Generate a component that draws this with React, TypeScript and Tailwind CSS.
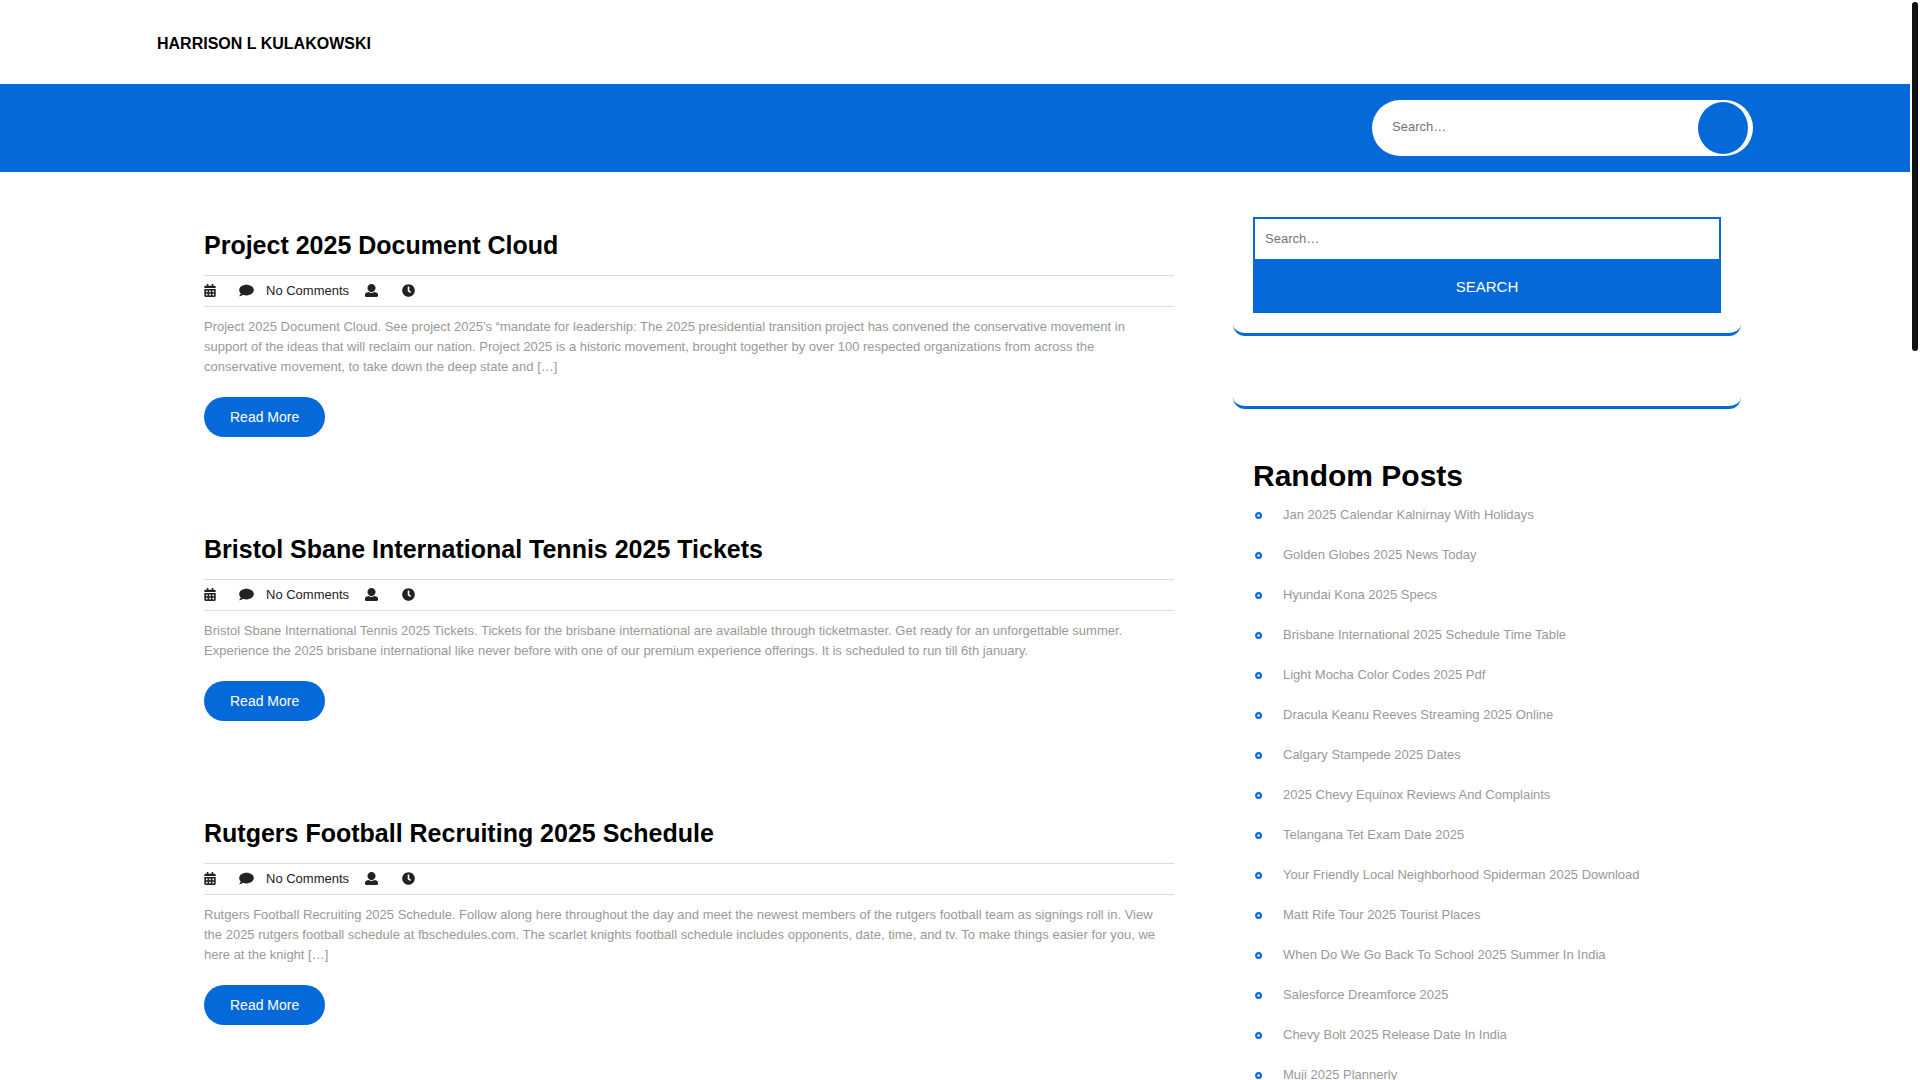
import React from 'react';
import { FaCalendarAlt, FaClock } from 'react-icons/fa';

const articles = [
  {
    title: 'Project 2025 Document Cloud',
    lines: [
      'Project 2025 Document Cloud. See project 2025’s “mandate for leadership: The 2025 presidential transition project has convened the conservative movement in',
      'support of the ideas that will reclaim our nation. Project 2025 is a historic movement, brought together by over 100 respected organizations from across the',
      'conservative movement, to take down the deep state and […]',
    ],
  },
  {
    title: 'Bristol Sbane International Tennis 2025 Tickets',
    lines: [
      'Bristol Sbane International Tennis 2025 Tickets. Tickets for the brisbane international are available through ticketmaster. Get ready for an unforgettable summer.',
      'Experience the 2025 brisbane international like never before with one of our premium experience offerings. It is scheduled to run till 6th january.',
    ],
  },
  {
    title: 'Rutgers Football Recruiting 2025 Schedule',
    lines: [
      'Rutgers Football Recruiting 2025 Schedule. Follow along here throughout the day and meet the newest members of the rutgers football team as signings roll in. View',
      'the 2025 rutgers football schedule at fbschedules.com. The scarlet knights football schedule includes opponents, date, time, and tv. To make things easier for you, we',
      'here at the knight […]',
    ],
  },
];

const randomPosts = [
  'Jan 2025 Calendar Kalnirnay With Holidays',
  'Golden Globes 2025 News Today',
  'Hyundai Kona 2025 Specs',
  'Brisbane International 2025 Schedule Time Table',
  'Light Mocha Color Codes 2025 Pdf',
  'Dracula Keanu Reeves Streaming 2025 Online',
  'Calgary Stampede 2025 Dates',
  '2025 Chevy Equinox Reviews And Complaints',
  'Telangana Tet Exam Date 2025',
  'Your Friendly Local Neighborhood Spiderman 2025 Download',
  'Matt Rife Tour 2025 Tourist Places',
  'When Do We Go Back To School 2025 Summer In India',
  'Salesforce Dreamforce 2025',
  'Chevy Bolt 2025 Release Date In India',
  'Muji 2025 Plannerly',
];

const CommentIcon: React.FC<{ className?: string }> = ({ className }) => (
  <svg viewBox="0 0 576 512" fill="currentColor" className={className} aria-hidden="true">
    <path d="M576 240c0 114.9-129 208-288 208-48.3 0-93.9-8.6-133.9-23.8-40.3 31.2-89.8 50.3-142.4 55.7-5.2.6-10.2-2.8-11.5-7.7-1.3-5 2.7-8.1 6.6-11.8 19.3-18.4 42.7-32.8 51.9-94.6C21.9 330.9 0 287.3 0 240 0 125.1 129 32 288 32s288 93.1 288 208z" />
  </svg>
);

const UserIcon: React.FC<{ className?: string }> = ({ className }) => (
  <svg viewBox="0 0 512 512" fill="currentColor" className={className} aria-hidden="true">
    <path d="M256 0c88.366 0 160 71.634 160 160s-71.634 160-160 160S96 248.366 96 160 167.634 0 256 0zm183.283 333.821l-71.313-17.828c-74.923 53.89-165.738 41.864-223.94 0l-71.313 17.828C29.981 344.505 0 382.903 0 426.955V464c0 26.51 21.49 48 48 48h416c26.51 0 48-21.49 48-48v-37.045c0-44.052-29.981-82.45-72.717-93.134z" />
  </svg>
);

const BulletIcon: React.FC<{ className?: string }> = ({ className }) => (
  <svg viewBox="0 0 7 7" fill="none" stroke="currentColor" className={className} aria-hidden="true">
    <circle cx="3.5" cy="3.5" r="2.4" strokeWidth="2.2" />
  </svg>
);

const Article: React.FC<{ title: string; lines: string[] }> = ({ title, lines }) => (
  <article>
    <h2 className="text-[25px] leading-[30px] font-bold text-black">
      <a href="#">{title}</a>
    </h2>
    <div className="mt-[15px] flex h-8 items-center border-y border-[#dddddd] text-[13px] text-[#222222]">
      <FaCalendarAlt className="mr-[23px] mb-px h-[13px] w-3" />
      <CommentIcon className="mr-3 mb-px h-[13px] w-[15px]" />
      <a href="#" className="mr-4">No Comments</a>
      <UserIcon className="mr-6 mb-px size-[13px]" />
      <FaClock className="mb-px size-[13px]" />
    </div>
    <p className="mt-[10px] text-[13px] leading-5 text-[#999999]">
      {lines.map((line) => (
        <span key={line} className="block whitespace-nowrap">{line}</span>
      ))}
    </p>
    <a href="#" className="mt-5 inline-flex h-10 items-center rounded-[20px] bg-[#0669d9] px-[26px] text-[14px] text-white">
      Read More
    </a>
  </article>
);

const App: React.FC = () => {
  return (
    <div className="flex h-screen overflow-hidden bg-white font-['Liberation_Sans',Arial,sans-serif]">
      <div className="min-w-0 flex-1">
        {/* Header */}
        <header>
          <div className="mx-auto flex h-[84px] max-w-[1600px] items-center px-0.5 pt-1">
            <a href="#" className="text-[16px] font-bold text-black uppercase">Harrison L Kulakowski</a>
          </div>
          <div className="bg-[#0669d9]">
            <div className="mx-auto flex h-[88px] max-w-[1600px] items-center justify-end px-0.5">
              <form role="search" className="flex h-14 w-[381px] items-center rounded-full bg-white pr-[5px] pl-5">
                <input
                  type="search"
                  aria-label="Search the site"
                  placeholder="Search…"
                  className="min-w-0 flex-1 pb-0.5 text-[13px] outline-none placeholder:text-[#757575]"
                />
                <button type="button" aria-label="Search" className="h-[52px] w-[50px] rounded-[50%] bg-[#0669d9]"></button>
              </form>
            </div>
          </div>
        </header>

        <div className="mx-auto flex max-w-[1600px] gap-[59px] pr-[14px] pl-[49px]">
          <main className="flex min-w-0 flex-1 flex-col gap-[97px] pt-[58px]">
            {articles.map((article) => (
              <Article key={article.title} {...article} />
            ))}
          </main>

          {/* Sidebar */}
          <aside className="w-[508px] shrink-0 pt-[25px]">
            <section className="rounded-xl border-b-3 border-[#0669d9] p-5">
              <form role="search" className="flex flex-col">
                <input
                  type="search"
                  aria-label="Search posts"
                  placeholder="Search…"
                  className="h-[42px] border-2 border-b-0 border-[#0669d9] px-[10px] pb-0.5 text-[13px] outline-none placeholder:text-[#757575]"
                />
                <button type="button" className="h-[54px] bg-[#0669d9] pt-0.5 text-[15px] text-white uppercase">Search</button>
              </form>
            </section>
            <section className="h-[73px] rounded-xl border-b-3 border-[#0669d9]"></section>
            <section className="px-5 pt-[49px]">
              <h3 className="text-[30px] leading-9 font-bold text-black">Random Posts</h3>
              <ul className="mt-px">
                {randomPosts.map((post) => (
                  <li key={post} className="flex h-10 items-center pl-0.5">
                    <BulletIcon className="mr-[21px] size-[7px] text-[#0669d9]" />
                    <a href="#" className="text-[13px] text-[#999999]">{post}</a>
                  </li>
                ))}
              </ul>
            </section>
          </aside>
        </div>
      </div>

      {/* Scroll track */}
      <div className="w-[10px] shrink-0 px-0.5 pt-0.5">
        <div className="h-[349px] rounded-full bg-[#111111]"></div>
      </div>
    </div>
  );
};

export default App;
